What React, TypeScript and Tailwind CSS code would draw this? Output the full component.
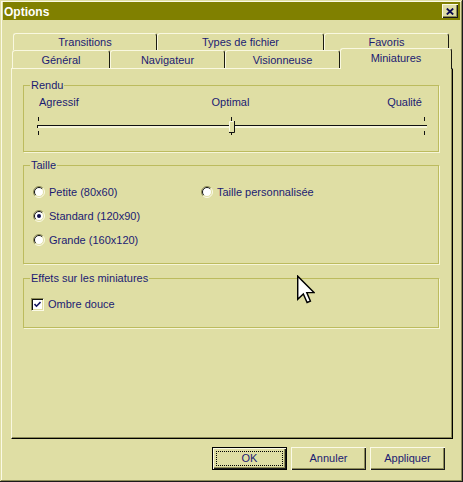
import React from "react";

const rowOne = [
  { label: "Transitions", w: "w-[144px]" },
  { label: "Types de fichier", w: "w-[167px]" },
  { label: "Favoris", w: "w-[125px]" },
];

const rowTwo = [
  { label: "Général", w: "w-[98px]" },
  { label: "Navigateur", w: "w-[115px]" },
  { label: "Visionneuse", w: "w-[115px]" },
];

function Radio({ checked }: { checked?: boolean }) {
  return (
    <svg width="12" height="12" viewBox="0 0 12 12" className="shrink-0">
      <circle cx="6" cy="6" r="5" fill="#ffffff" />
      <path d="M2.1 9.9 A5.5 5.5 0 0 1 9.9 2.1" stroke="#8d8c58" fill="none" />
      <path d="M2.8 9.2 A4.5 4.5 0 0 1 9.2 2.8" stroke="#111111" fill="none" />
      <path d="M9.9 2.1 A5.5 5.5 0 0 1 2.1 9.9" stroke="#fbfae6" fill="none" />
      <path d="M9.2 2.8 A4.5 4.5 0 0 1 2.8 9.2" stroke="#dfdea4" fill="none" />
      {checked && <circle cx="6" cy="6" r="2" fill="#10104e" />}
    </svg>
  );
}

function RadioRow({ label, checked }: { label: string; checked?: boolean }) {
  return (
    <div className="h-[24px] flex items-center gap-[4px]">
      <Radio checked={checked} />
      <span>{label}</span>
    </div>
  );
}

function Button({ label, isDefault }: { label: string; isDefault?: boolean }) {
  return (
    <div
      className={`w-[75px] h-[23px] relative flex items-center justify-center bg-[#dfdea4] ${
        isDefault
          ? "border border-black shadow-[inset_1px_1px_0_#fbfae6,inset_-1px_-1px_0_#1a1a1a,inset_-2px_-2px_0_#8d8c58]"
          : "shadow-[inset_1px_1px_0_#fbfae6,inset_-1px_-1px_0_#1a1a1a,inset_-2px_-2px_0_#8d8c58]"
      }`}
    >
      {isDefault && (
        <div className="absolute inset-[3px] border border-dotted border-black" />
      )}
      <span>{label}</span>
    </div>
  );
}

export default function App() {
  return (
    <div className="w-[463px] h-[482px] relative overflow-hidden bg-[#dfdea4] flex flex-col pt-[2px] px-[3px] text-[11px] leading-[13px] text-[#1b1b72] font-['Liberation_Sans',Arial,sans-serif] shadow-[inset_-1px_-1px_0_#1a1a1a,inset_1px_1px_0_#dfdea4,inset_-2px_-2px_0_#8d8c58,inset_2px_2px_0_#fbfae6]">
      {/* title bar */}
      <div className="h-[18px] bg-[#808000] flex items-center pl-[1px]">
        <span className="text-white font-bold text-[12px] pt-[2px]">Options</span>
        <div className="ml-auto mr-[2px] w-[16px] h-[14px] bg-[#dfdea4] flex items-center justify-center shadow-[inset_1px_1px_0_#fbfae6,inset_-1px_-1px_0_#1a1a1a,inset_-2px_-2px_0_#8d8c58]">
          <svg width="8" height="7" viewBox="0 0 8 7">
            <path d="M0.8 0.5 L7.2 6.5 M7.2 0.5 L0.8 6.5" stroke="#0c0c50" strokeWidth="1.8" />
          </svg>
        </div>
      </div>

      <div className="ml-[8px] mt-[13px] w-[442px]">
        {/* tabs */}
        <div className="flex ml-[2px]">
          {rowOne.map((t) => (
            <div
              key={t.label}
              className={`${t.w} h-[17px] flex items-center justify-center pt-[1px] border-l border-t border-[#f9f8e0] border-r border-r-[#1b1b10] rounded-t-[3px]`}
            >
              {t.label}
            </div>
          ))}
        </div>
        <div className="flex items-end h-[18px] ml-[1px]">
          {rowTwo.map((t) => (
            <div
              key={t.label}
              className={`${t.w} h-[18px] flex items-center justify-center pt-[2px] border-l border-t border-[#f9f8e0] border-r border-r-[#1b1b10] rounded-t-[3px]`}
            >
              {t.label}
            </div>
          ))}
          <div className="w-[112px] h-[21px] -mb-px relative z-10 bg-[#dfdea4] flex items-center justify-center pb-[2px] border-l border-t border-[#f9f8e0] border-r border-r-[#1b1b10] rounded-t-[3px]">
            Miniatures
          </div>
        </div>

        {/* panel */}
        <div className="w-[442px] h-[371px] flex flex-col px-[11px] border border-[#f9f8e0] border-r-black border-b-black shadow-[inset_-1px_-1px_0_#8d8c58]">
          <fieldset className="mt-[10px] w-[416px] h-[73px] border border-[#bcbb5e] shadow-[1px_1px_0_#f6f5d8]">
            <legend className="ml-[6px] px-[1px] leading-[13px]">Rendu</legend>
            <div className="grid grid-cols-3 pt-[4px] pl-[15px] pr-[16px]">
              <span>Agressif</span>
              <span className="text-center">Optimal</span>
              <span className="text-right">Qualité</span>
            </div>
            <svg width="392" height="22" viewBox="0 0 392 22" className="mt-[6px] ml-[12px] block">
              <rect x="2" y="2" width="1" height="4" fill="#111" />
              <rect x="195" y="2" width="1" height="4" fill="#111" />
              <rect x="388" y="2" width="1" height="4" fill="#111" />
              <rect x="1" y="10" width="390" height="1" fill="#111" />
              <rect x="1" y="10" width="1" height="3" fill="#111" />
              <rect x="2" y="11" width="389" height="2" fill="#f6f5d8" />
              <rect x="2" y="16" width="1" height="4" fill="#111" />
              <rect x="195" y="16" width="1" height="4" fill="#111" />
              <rect x="388" y="16" width="1" height="4" fill="#111" />
              <rect x="193" y="6" width="5" height="11" fill="#dfdea4" />
              <path d="M193.5 16.5 V6.5 H197.5" stroke="#fbfae6" fill="none" />
              <path d="M198.5 6 V17.5 H193" stroke="#111" fill="none" />
            </svg>
          </fieldset>

          <fieldset className="mt-[7px] w-[416px] h-[105px] border border-[#bcbb5e] shadow-[1px_1px_0_#f6f5d8]">
            <legend className="ml-[6px] px-[1px] leading-[13px]">Taille</legend>
            <div className="grid grid-cols-[168px_1fr] pt-[8px] pl-[9px]">
              <div className="flex flex-col">
                <RadioRow label="Petite (80x60)" />
                <RadioRow label="Standard (120x90)" checked />
                <RadioRow label="Grande (160x120)" />
              </div>
              <div className="flex flex-col">
                <RadioRow label="Taille personnalisée" />
              </div>
            </div>
          </fieldset>

          <fieldset className="mt-[8px] w-[416px] h-[56px] border border-[#bcbb5e] shadow-[1px_1px_0_#f6f5d8]">
            <legend className="ml-[6px] px-[1px] leading-[13px]">Effets sur les miniatures</legend>
            <div className="flex items-center gap-[4px] pt-[13px] pl-[7px]">
              <span className="w-[13px] h-[13px] bg-white flex items-center justify-center border border-[#8d8c58] border-r-[#fbfae6] border-b-[#fbfae6] shadow-[inset_1px_1px_0_#111,inset_-1px_-1px_0_#dfdea4]">
                <svg width="7" height="7" viewBox="0 0 7 7">
                  <path d="M0.5 3 L2.5 5.2 L6.5 1" stroke="#13135e" strokeWidth="1.6" fill="none" />
                </svg>
              </span>
              <span>Ombre douce</span>
            </div>
          </fieldset>
        </div>
      </div>

      {/* buttons */}
      <div className="mt-[8px] mr-[15px] flex justify-end gap-[4px]">
        <Button label="OK" isDefault />
        <Button label="Annuler" />
        <Button label="Appliquer" />
      </div>

      {/* mouse cursor */}
      <svg
        width="18"
        height="29"
        viewBox="0 0 12.5 19.5"
        className="absolute left-[297px] top-[275px]"
      >
        <path
          d="M0.5 0.5 V16.5 L4.4 12.8 L7 18.8 L9.3 17.8 L6.8 11.9 L11.8 11.9 Z"
          fill="#ffffff"
          stroke="#000000"
          strokeWidth="1"
          strokeLinejoin="miter"
        />
      </svg>
    </div>
  );
}
